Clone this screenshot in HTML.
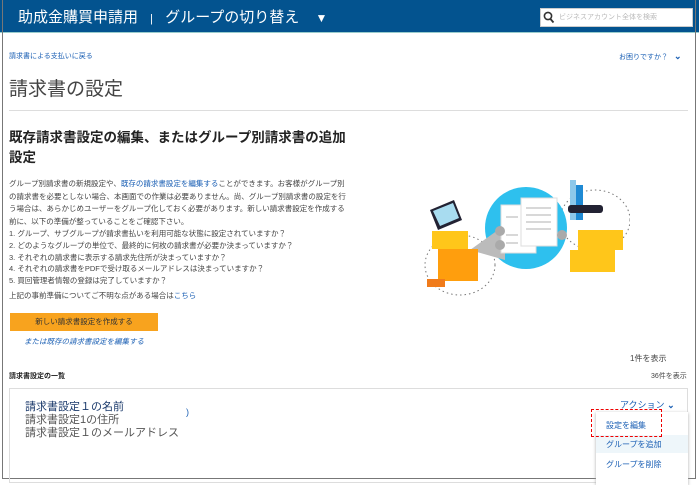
<!DOCTYPE html>
<html><head><meta charset="utf-8"><style>
*{margin:0;padding:0;box-sizing:border-box}
body{width:699px;height:485px;background:#fff;font-family:"Liberation Sans","Noto Sans CJK JP",sans-serif;position:relative;overflow:hidden;color:#333}
.a{position:absolute;white-space:nowrap}
.hdr{position:absolute;left:0;top:0;width:699px;height:33px;background:#03538f;border-bottom:1px solid #9cc}
.frame{position:absolute;left:2px;top:0;width:694px;height:479px;border:1px solid #777;border-top:none}
.lk{color:#1a5fb4}
p.t{font-size:7.5px;line-height:12.5px;color:#444}
</style></head><body>
<div class="hdr"></div>
<div class="frame"></div>
<div class="a" style="left:18px;top:6px;font-size:15px;color:#fff">助成金購買申請用 <span style="font-size:11px;margin:0 8px">|</span> グループの切り替え <span style="font-size:12px;margin-left:12px">▼</span></div>
<div class="a" style="left:540px;top:8px;width:153px;height:19px;background:#fff;border:1px solid #ccc"></div>
<svg class="a" style="left:543px;top:11px" width="12" height="13"><circle cx="5" cy="5" r="3.6" fill="none" stroke="#333" stroke-width="1.6"/><path d="M7.5 8 L10.5 11.5" stroke="#333" stroke-width="1.8"/></svg>
<div class="a" style="left:559px;top:12px;font-size:7px;color:#bbb">ビジネスアカウント全体を検索</div>

<div class="a lk" style="left:9px;top:51px;font-size:7px">請求書による支払いに戻る</div>
<div class="a lk" style="left:619px;top:51px;font-size:7px">お困りですか？ <b style="font-size:9px;color:#1a5fb4;margin-left:4px">⌄</b></div>
<div class="a" style="left:9px;top:74px;font-size:19px;color:#444">請求書の設定</div>
<div class="a" style="left:9px;top:110px;width:679px;border-top:1px solid #ddd"></div>

<div class="a" style="left:9px;top:128px;font-size:13.5px;font-weight:bold;line-height:20px;color:#222">既存請求書設定の編集、またはグループ別請求書の追加<br>設定</div>
<div class="a" style="left:9px;top:178px"><p class="t">グループ別請求書の新規設定や、<span class="lk">既存の請求書設定を編集する</span>ことができます。お客様がグループ別<br>の請求書を必要としない場合、本画面での作業は必要ありません。尚、グループ別請求書の設定を行<br>う場合は、あらかじめユーザーをグループ化しておく必要があります。新しい請求書設定を作成する<br>前に、以下の準備が整っていることをご確認下さい。</p></div>
<div class="a" style="left:9px;top:228px"><p class="t" style="line-height:11.8px">1. グループ、サブグループが請求書払いを利用可能な状態に設定されていますか？<br>2. どのようなグループの単位で、最終的に何枚の請求書が必要か決まっていますか？<br>3. それぞれの請求書に表示する請求先住所が決まっていますか？<br>4. それぞれの請求書をPDFで受け取るメールアドレスは決まっていますか？<br>5. 買回管理者情報の登録は完了していますか？</p></div>
<div class="a" style="left:9px;top:290px"><p class="t">上記の事前準備についてご不明な点がある場合は<span class="lk">こちら</span></p></div>
<div class="a" style="left:10px;top:313px;width:148px;height:18px;background:#f8a31e;font-size:7.5px;color:#333;text-align:center;line-height:18px">新しい請求書設定を作成する</div>
<div class="a lk" style="left:24px;top:336px;font-size:7.5px;font-style:italic">または既存の請求書設定を編集する</div>

<svg class="a" style="left:410px;top:175px" width="220" height="125">
<g fill="none" stroke="#777" stroke-dasharray="1.5 3" stroke-width="1"><ellipse cx="50" cy="90" rx="35" ry="30"/><ellipse cx="185" cy="45" rx="35" ry="30"/></g>
<circle cx="116" cy="53" r="41" fill="#2ec0ee"/>
<path d="M60 75 L95 50 L95 85 Z" fill="#bbb"/>
<rect x="91" y="30" width="35" height="48" fill="#fff" stroke="#ddd"/>
<rect x="111" y="23" width="36" height="48" fill="#fff" stroke="#ddd"/>
<g stroke="#ccc" stroke-width="1.5"><path d="M116 33h25M116 40h25M116 47h25M116 54h25M96 42h12M96 60h12M96 68h12"/></g>
<circle cx="90" cy="56" r="5" fill="#aaa"/><circle cx="90" cy="70" r="5" fill="#aaa"/><circle cx="152" cy="60" r="5" fill="#aaa"/>
<path d="M20 35 L44 25 L52 45 L28 55Z" fill="#223"/><path d="M23 36 L43 28 L49 43 L30 51Z" fill="#a8dcf0"/>
<rect x="22" y="56" width="36" height="18" fill="#ffc61a"/>
<rect x="28" y="74" width="40" height="32" fill="#ff9e0d"/>
<rect x="17" y="104" width="18" height="8" fill="#f07b1b"/>
<rect x="160" y="5" width="6" height="40" fill="#8dc8ea"/><rect x="166" y="10" width="7" height="35" fill="#1f8ad4"/>
<rect x="158" y="30" width="35" height="8" rx="3" fill="#223"/>
<rect x="168" y="55" width="45" height="20" fill="#ffc61a"/><rect x="160" y="75" width="45" height="22" fill="#ffc61a"/>
</svg>

<div class="a" style="left:630px;top:353px;font-size:8px;color:#444">1件を表示</div>
<div class="a" style="left:9px;top:371px;font-size:7px;color:#222;font-weight:bold">請求書設定の一覧</div>
<div class="a" style="left:651px;top:371px;font-size:7px;color:#444">36件を表示</div>
<div class="a" style="left:9px;top:388px;width:679px;height:95px;border:1px solid #ddd"></div>
<div class="a" style="left:25px;top:401px;font-size:11px;line-height:13px;color:#555"><span style="color:#1b3a6b">請求書設定１の名前</span><br>請求書設定1の住所<br>請求書設定１のメールアドレス</div>
<div class="a" style="left:186px;top:407px;font-size:9px;color:#1a5fb4">)</div>
<div class="a lk" style="left:620px;top:398px;font-size:9px">アクション <b>⌄</b></div>
<div class="a" style="left:596px;top:412px;width:92px;height:73px;background:#fff;box-shadow:0 1px 3px #aaa"></div>
<div class="a" style="left:596px;top:435px;width:92px;height:18px;background:#eef6fa"></div>
<div class="a lk" style="left:606px;top:420px;font-size:8px">設定を編集</div>
<div class="a lk" style="left:606px;top:439px;font-size:8px">グループを追加</div>
<div class="a lk" style="left:606px;top:459px;font-size:8px">グループを削除</div>
<div class="a" style="left:591px;top:409px;width:71px;height:28px;border:1px dashed #e00"></div>
</body></html>
